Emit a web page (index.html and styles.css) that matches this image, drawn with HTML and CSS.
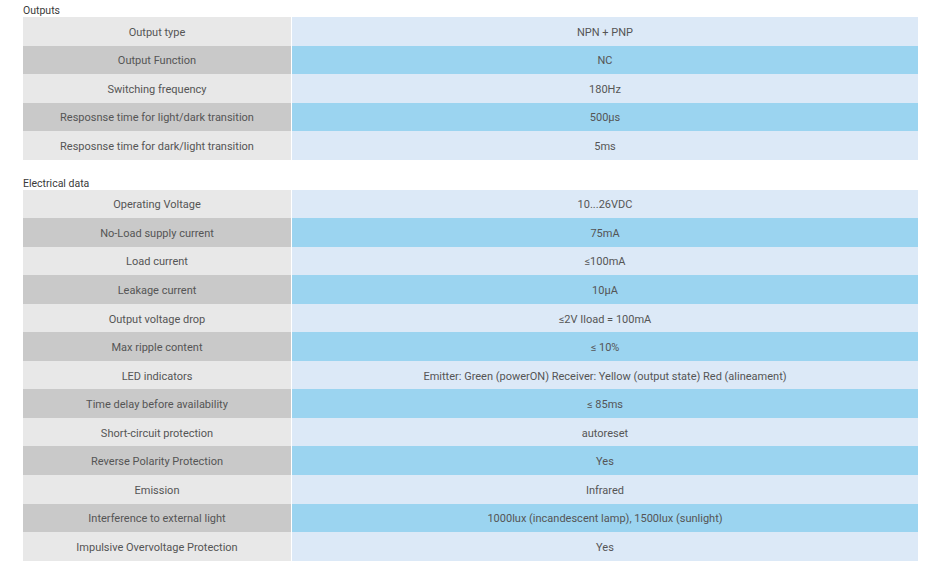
FILE: index.html
```html
<!DOCTYPE html>
<html lang="en">
<head>
<meta charset="utf-8">
<title>Specifications</title>
<link rel="stylesheet" href="styles.css">
</head>
<body>
<div class="page">
  <section class="spec">
    <h3 class="spec-title">Outputs</h3>
    <table class="spec-table">
      <tbody>
        <tr><td class="label">Output type</td><td class="value">NPN + PNP</td></tr>
        <tr><td class="label">Output Function</td><td class="value">NC</td></tr>
        <tr><td class="label">Switching frequency</td><td class="value">180Hz</td></tr>
        <tr><td class="label">Resposnse time for light/dark transition</td><td class="value">500µs</td></tr>
        <tr><td class="label">Resposnse time for dark/light transition</td><td class="value">5ms</td></tr>
      </tbody>
    </table>
  </section>
  <section class="spec spec-second">
    <h3 class="spec-title">Electrical data</h3>
    <table class="spec-table">
      <tbody>
        <tr><td class="label">Operating Voltage</td><td class="value">10...26VDC</td></tr>
        <tr><td class="label">No-Load supply current</td><td class="value">75mA</td></tr>
        <tr><td class="label">Load current</td><td class="value">≤100mA</td></tr>
        <tr><td class="label">Leakage current</td><td class="value">10µA</td></tr>
        <tr><td class="label">Output voltage drop</td><td class="value">≤2V Iload = 100mA</td></tr>
        <tr><td class="label">Max ripple content</td><td class="value">≤ 10%</td></tr>
        <tr><td class="label">LED indicators</td><td class="value">Emitter: Green (powerON) Receiver: Yellow (output state) Red (alineament)</td></tr>
        <tr><td class="label">Time delay before availability</td><td class="value">≤ 85ms</td></tr>
        <tr><td class="label">Short-circuit protection</td><td class="value">autoreset</td></tr>
        <tr><td class="label">Reverse Polarity Protection</td><td class="value">Yes</td></tr>
        <tr><td class="label">Emission</td><td class="value">Infrared</td></tr>
        <tr><td class="label">Interference to external light</td><td class="value">1000lux (incandescent lamp), 1500lux (sunlight)</td></tr>
        <tr><td class="label">Impulsive Overvoltage Protection</td><td class="value">Yes</td></tr>
      </tbody>
    </table>
  </section>
</div>
</body>
</html>
```
FILE: styles.css
```css
html, body {
  margin: 0;
  padding: 0;
  background: #ffffff;
}
body {
  font-family: Roboto, "Liberation Sans", sans-serif;
  font-size: 11px;
  color: #555555;
}
.page {
  padding: 0 22px 0 23px;
}
.spec-title {
  margin: 0;
  height: 17px;
  line-height: 21px;
  font-size: 10.5px;
  font-weight: normal;
  color: #3a3a3a;
}
.spec-second {
  margin-top: 13px;
}
.spec-second .spec-title {
  line-height: 22px;
}
.spec-table {
  width: 100%;
  border-collapse: collapse;
  table-layout: fixed;
}
.spec-table td {
  box-sizing: border-box;
  height: 28.54px;
  padding: 3px 0 0;
  text-align: center;
  vertical-align: middle;
  line-height: 14px;
}
.label {
  width: 30%;
  background: #e8e8e8;
  border-right: 1.3px solid #ffffff;
}
.value {
  background: #dce9f7;
}
.spec-table tr:nth-child(even) .label {
  background: #c9c9c9;
}
.spec-table tr:nth-child(even) .value {
  background: #9bd4f0;
}
```
